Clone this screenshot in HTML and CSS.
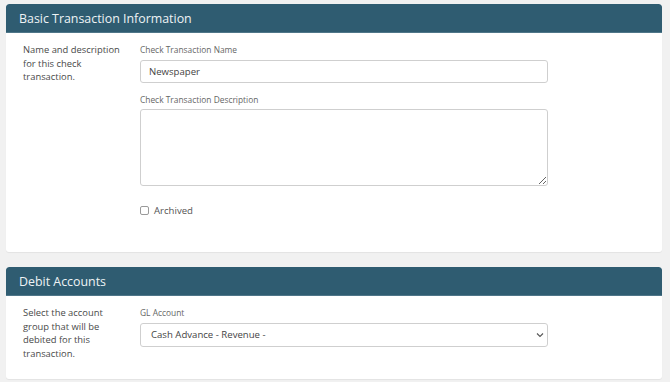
FILE: index.html
```html
<!DOCTYPE html>
<html>
<head>
<meta charset="utf-8">
<link rel="stylesheet" href="styles.css">
</head>
<body>
<div class="page">
  <section class="card">
    <div class="card-header"><h2 class="card-title">Basic Transaction Information</h2></div>
    <div class="card-body card-body-first">
      <div class="desc">Name and description for this check transaction.</div>
      <div class="fields">
        <div class="group">
          <label class="label">Check Transaction Name</label>
          <input class="control" type="text" value="Newspaper">
        </div>
        <div class="group">
          <label class="label">Check Transaction Description</label>
          <textarea class="control textarea"></textarea>
        </div>
        <div class="check-row">
          <span class="checkbox"></span>
          <span class="check-label">Archived</span>
        </div>
      </div>
    </div>
  </section>
  <section class="card">
    <div class="card-header"><h2 class="card-title">Debit Accounts</h2></div>
    <div class="card-body card-body-second">
      <div class="desc">Select the account group that will be debited for this transaction.</div>
      <div class="fields">
        <div class="group">
          <label class="label">GL Account</label>
          <div class="control select">
            <span class="select-text">Cash Advance - Revenue -</span>
            <svg class="chev" width="8" height="6" viewBox="0 0 8 6"><path d="M1 1.5 L4 4.5 L7 1.5" fill="none" stroke="#555" stroke-width="1.1"/></svg>
          </div>
        </div>
      </div>
    </div>
  </section>
</div>
</body>
</html>
```
FILE: styles.css
```css
* { box-sizing: border-box; }
html, body { margin: 0; padding: 0; }
body {
  background: #f1f1f1;
  font-family: "Open Sans", "Noto Sans", sans-serif;
  width: 670px;
  height: 382px;
  overflow: hidden;
}
.page {
  padding: 4px 8px 0 6px;
  display: flex;
  flex-direction: column;
  gap: 15px;
}
.card {
  background: #fff;
  border-radius: 3px;
  box-shadow: 0 1px 1px rgba(0,0,0,0.06);
  overflow: hidden;
}
.card-header {
  background: #2f5c71;
  height: 29px;
  border-bottom: 1px solid #4f7689;
  display: flex;
  align-items: center;
  padding-left: 13px;
  border-radius: 3px 3px 0 0;
}
.card-title {
  margin: 0;
  font-weight: 400;
  font-size: 12.4px;
  color: #eef3f5;
}
.card-body {
  display: flex;
  padding: 10px 0 0 17px;
}
.card-body-first { height: 219px; }
.card-body-second { height: 83px; }
.desc {
  flex: 0 0 101px;
  width: 101px;
  margin-right: 16px;
  font-size: 9.4px;
  line-height: 13.5px;
  color: #4a4a4a;
}
.fields {
  flex: 0 0 408px;
  width: 408px;
  display: flex;
  flex-direction: column;
}
.group {
  display: flex;
  flex-direction: column;
  margin-bottom: 10px;
}
.label {
  font-size: 8.4px;
  line-height: 13.5px;
  color: #666;
  margin-bottom: 3px;
}
.control {
  width: 408px;
  height: 23px;
  border: 1px solid #cfcfcf;
  border-radius: 3px;
  padding: 0 8px;
  font-family: "Open Sans", "Noto Sans", sans-serif;
  font-size: 9.6px;
  color: #444;
  background: #fff;
  outline: none;
}
.textarea {
  height: 77px;
  resize: vertical;
  display: block;
}
.select {
  height: 24px;
  display: flex;
  align-items: center;
  justify-content: space-between;
  padding: 0 3px 0 10px;
}
.chev { display: block; }
.check-row {
  display: flex;
  align-items: center;
  margin-top: 7px;
  height: 15px;
}
.checkbox {
  width: 9px;
  height: 9px;
  border: 1px solid #9a9a9a;
  border-radius: 2px;
  margin-right: 5px;
}
.check-label {
  font-size: 9.6px;
  color: #555;
}
```
